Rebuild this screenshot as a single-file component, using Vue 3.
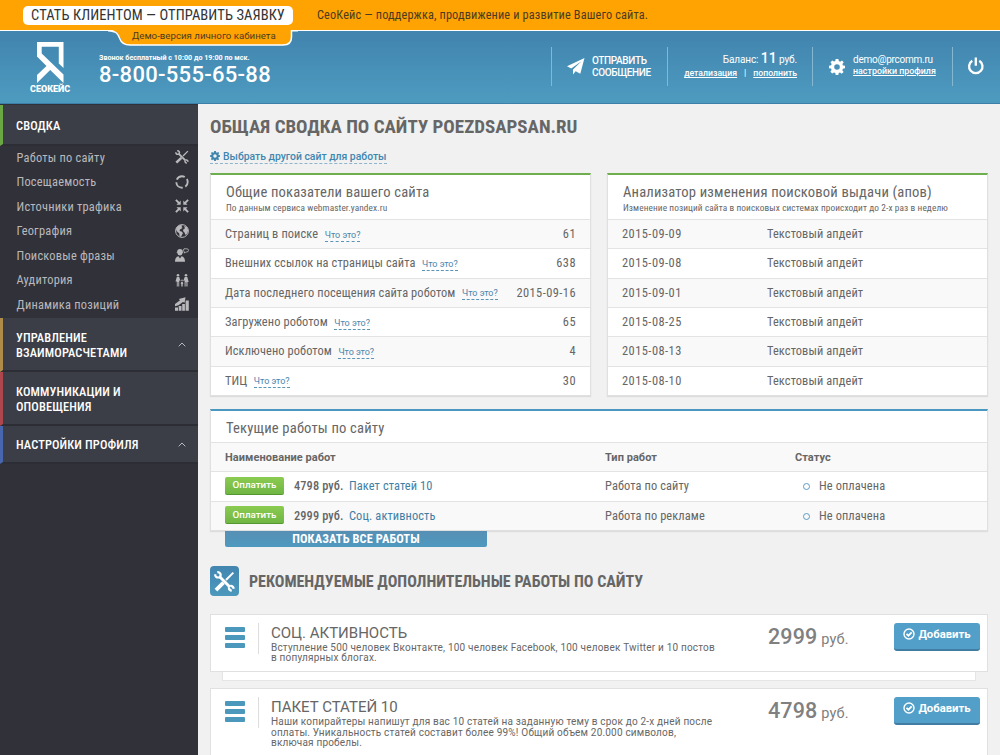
<template>
  <div class="page">
    <!-- Promo bar -->
    <div class="topbar">
      <a class="client-btn">СТАТЬ КЛИЕНТОМ — ОТПРАВИТЬ ЗАЯВКУ</a>
      <span class="slogan">СеоКейс — поддержка, продвижение и развитие Вашего сайта.</span>
    </div>

    <header class="header">
      <div class="demo-tab">
        <svg width="190" height="18" viewBox="0 0 190 18">
          <path d="M3 0 C10 1 10 4 13 9 Q15 15 22 15 H175 Q183.500 15 183.500 7 V0" fill="#ffa303" />
          <path d="M0 .7 C9 1 10 4 12 9 Q14 15 22 15 H175 Q183.500 15 183.500 7 V.7 H190" fill="none" stroke="#fff" stroke-width="1.500" />
        </svg>
        <span>Демо-версия личного кабинета</span>
      </div>

      <div class="logo">
        <svg width="27" height="41" viewBox="0 0 27 41">
          <path d="M0 0H26.500V26L21.800 21.500V4.700H4.700V11.500L26.500 32.500V41L13.200 28L0 41V33L9.500 24L0 14.500Z" fill="#fff" />
        </svg>
        <b>СЕОКЕЙС</b>
      </div>

      <div class="phone">
        <small>Звонок бесплатный с 10:00 до 19:00 по мск.</small>
        <strong>8-800-555-65-88</strong>
      </div>

      <div class="tool message">
        <svg width="18" height="17" viewBox="0 0 18 17" fill="#fff">
          <path d="M17.500 0L0 8.300L4.200 10.400L14.500 3.200L6 11.500V16.500L8.600 13.200L13.300 15.800Z" />
        </svg>
        <span>ОТПРАВИТЬ<br />СООБЩЕНИЕ</span>
      </div>
      <div class="tool balance">
        <div class="sum">Баланс: <b>11</b> руб.</div>
        <div class="links"><a>детализация</a><i>|</i><a>пополнить</a></div>
      </div>
      <div class="tool user">
        <svg width="16" height="16" viewBox="0 0 16 16"><path :d="gear" fill="#fff" fill-rule="evenodd" /></svg>
        <div>
          <div class="mail">demo@prcomm.ru</div>
          <a>настройки профиля</a>
        </div>
      </div>
      <div class="tool power">
        <svg width="18" height="18" viewBox="0 0 18 18" fill="none" stroke="#fff" stroke-width="2.300">
          <path d="M5.300 3.800A6.700 6.700 0 1 0 12.300 3.800M8.800 .5V8.800" />
        </svg>
      </div>
    </header>

    <div class="body">
      <aside class="sidebar">
        <div class="menu-head green">СВОДКА</div>
        <ul class="menu">
          <li v-for="item in menu" :key="item.text">
            <span>{{ item.text }}</span>
            <svg width="14" height="14" viewBox="0 0 14 14" v-html="item.icon"></svg>
          </li>
        </ul>
        <div v-for="s in sections" :key="s.color" class="menu-head" :class="s.color">
          <span>{{ s.text }}</span>
          <svg v-if="s.arrow" width="8" height="5" viewBox="0 0 8 5"><path d="M.7 4.300L4 1L7.300 4.300" fill="none" stroke="#b9babd" /></svg>
        </div>
      </aside>

      <main class="content">
        <h1>ОБЩАЯ СВОДКА ПО САЙТУ POEZDSAPSAN.RU</h1>
        <a class="choose">
          <svg width="10" height="10" viewBox="0 0 16 16"><path :d="gear" fill="#3f86af" fill-rule="evenodd" /></svg>
          <span>Выбрать другой сайт для работы</span>
        </a>

        <div class="columns">
          <section class="card">
            <div class="card-head">
              <h2>Общие показатели вашего сайта</h2>
              <p>По данным сервиса webmaster.yandex.ru</p>
            </div>
            <div v-for="row in stats" :key="row.name" class="row">
              <span>{{ row.name }}</span><a class="hint">Что это?</a>
              <span class="value">{{ row.value }}</span>
            </div>
          </section>
          <section class="card">
            <div class="card-head">
              <h2>Анализатор изменения поисковой выдачи (апов)</h2>
              <p>Изменение позиций сайта в поисковых системах происходит до 2-х раз в неделю</p>
            </div>
            <div v-for="d in updates" :key="d" class="row">
              <span class="date">{{ d }}</span><span>Текстовый апдейт</span>
            </div>
          </section>
        </div>

        <section class="card works">
          <div class="card-head"><h2>Текущие работы по сайту</h2></div>
          <div class="row titles">
            <b>Наименование работ</b><b>Тип работ</b><b>Статус</b>
          </div>
          <div v-for="w in works" :key="w.name" class="row">
            <div class="work"><button class="pay">Оплатить</button><em>{{ w.price }} руб.</em><a>{{ w.name }}</a></div>
            <span>{{ w.type }}</span>
            <span class="status"><i></i>Не оплачена</span>
          </div>
        </section>
        <button class="show-all">ПОКАЗАТЬ ВСЕ РАБОТЫ</button>

        <div class="recommend">
          <span class="badge"><svg width="21" height="21" viewBox="0 0 14 14" v-html="tools"></svg></span>
          <h3>РЕКОМЕНДУЕМЫЕ ДОПОЛНИТЕЛЬНЫЕ РАБОТЫ ПО САЙТУ</h3>
        </div>

        <div v-for="o in offers" :key="o.title" class="offer-wrap">
          <article class="offer">
            <div class="burger"><i></i><i></i><i></i></div>
            <div class="about">
              <h4>{{ o.title }}</h4>
              <p><template v-for="line in o.lines" :key="line">{{ line }}<br /></template></p>
            </div>
            <div class="price"><b>{{ o.price }}</b> руб.</div>
            <button class="add">
              <svg width="12" height="12" viewBox="0 0 12 12" fill="none" stroke="#fff">
                <circle cx="6" cy="6" r="5" stroke-width="1.400" />
                <path d="M3.500 5.900L5.400 7.700L8.700 4.300" stroke-width="1.800" />
              </svg>
              <span>Добавить</span>
            </button>
          </article>
          <div class="under"></div>
        </div>
      </main>
    </div>
  </div>
</template>

<script setup>
const gear = 'M6.600 0H9.400L9.800 2.100L11.200 2.700L13 1.500L14.700 3.300L13.400 5L14 6.500L16 6.800V9.300L13.900 9.700L13.300 11.200L14.600 13L12.700 14.700L11 13.500L9.700 14L9.300 16H6.700L6.300 14L5 13.400L3.200 14.600L1.400 12.800L2.600 11L2 9.600L0 9.200V6.700L2.100 6.300L2.700 5L1.500 3.200L3.300 1.400L5 2.600L6.300 2.100ZM8 5.200A2.800 2.800 0 1 0 8 10.800A2.800 2.800 0 1 0 8 5.200Z';

const tools =
  '<g fill="none" stroke="currentColor"><path d="M3.800 3.800L10.600 10.600" stroke-width="1.900"/><path d="M.8 2.200Q.7 4.600 3.400 4.300Q4.900 3.500 4.200 1.700Q3.500.7 2.200.8M10 10.800Q9.700 12.700 11.800 13.200M13.200 11.800Q12.600 9.700 10.800 10" stroke-width="1.500"/><path d="M8 6L12.900 1.100" stroke-width="1.300"/><path d="M1.300 12.700L6.300 7.800" stroke-width="2.500"/></g>';

const menu = [
  { text: 'Работы по сайту', icon: tools },
  { text: 'Посещаемость', icon: '<circle cx="7" cy="7" r="5.700" fill="none" stroke="currentColor" stroke-width="1.900" stroke-dasharray="9.200 2.740" stroke-dashoffset="4"/>' },
  { text: 'Источники трафика', icon: '<g fill="currentColor"><path d="M5.700 5.700H1.500L2.900 4.300L.2 1.600L1.600.2L4.300 2.900L5.700 1.500ZM8.300 5.700V1.500L9.700 2.900L12.400.2L13.800 1.600L11.100 4.300L12.500 5.700ZM5.700 8.300V12.500L4.300 11.100L1.600 13.800L.2 12.400L2.900 9.700L1.500 8.300ZM8.300 8.300H12.500L11.100 9.700L13.800 12.400L12.400 13.800L9.700 11.100L8.300 12.500Z"/></g>' },
  { text: 'География', icon: '<circle cx="7" cy="7" r="6.400" fill="none" stroke="currentColor"/><path d="M1 4.500Q2.300 1.700 5 1L7.500 1.500L6.500 3L7.500 4L5 5.500L4.500 7L6.500 7.500L8 9L6 12.800L4.500 12.500L4.300 9.500L1.500 7ZM9 2L12 3L13.200 6L12.300 9.500L10.500 11L9.500 8.500L8 7L8.600 5L10 4.500Z" fill="currentColor"/>' },
  { text: 'Поисковые фразы', icon: '<path d="M2.200 3.800Q2.200 1 5 1Q7.800 1 7.800 3.800L8.600 4.200L7.700 4.800Q7.400 7.400 5 7.400Q2.600 7.400 2.200 4.700L1.400 4.200ZM0 13.800Q0 9 3.500 8.300L5 10.500L6.500 8.300Q10 9 10 13.800Z" fill="currentColor"/><path d="M9 .8H12Q13.500.8 13.500 2.300Q13.500 4 11.800 4H10.700L9.500 5.200V3.800Q8.300 3.500 8.300 2.300Q8.300.8 9.500.8" fill="none" stroke="currentColor" stroke-width=".8"/>' },
  { text: 'Аудитория', icon: '<g fill="currentColor"><circle cx="3" cy="2.200" r="1.300"/><circle cx="11" cy="2.200" r="1.300"/><circle cx="7" cy="7.300" r=".8"/><path d="M1.800 4H4.200L5.500 8L4.800 8.300L4.200 6.800V13.500H3.300V9H2.700V13.500H1.800V8.500H.5ZM9.700 4H12.300L13.700 9H12.500V13.500H11.400V9.300H10.600V13.500H9.600V7L9 8.300L8.300 8ZM6.300 8.800H7.700L8.300 11H7.700V13.500H6.300V11H5.700Z"/></g>' },
  { text: 'Динамика позиций', icon: '<path d="M0 10.500H3V13.800H0ZM3.700 9H6.500V13.800H3.700ZM7.200 7H9.900V13.800H7.200ZM10.600 3.500H13.800V13.800H10.600ZM0 9.300V7L5 3.200L3.800 2L10.500.3L9.600 5.700L8 5L3.500 8.300Z" fill="currentColor"/>' },
];

const sections = [
  { text: 'УПРАВЛЕНИЕ ВЗАИМОРАСЧЕТАМИ', color: 'brown', arrow: true },
  { text: 'КОММУНИКАЦИИ И ОПОВЕЩЕНИЯ', color: 'red', arrow: false },
  { text: 'НАСТРОЙКИ ПРОФИЛЯ', color: 'blue', arrow: true },
];

const stats = [
  { name: 'Страниц в поиске', value: '61' },
  { name: 'Внешних ссылок на страницы сайта', value: '638' },
  { name: 'Дата последнего посещения сайта роботом', value: '2015-09-16' },
  { name: 'Загружено роботом', value: '65' },
  { name: 'Исключено роботом', value: '4' },
  { name: 'ТИЦ', value: '30' },
];

const updates = ['2015-09-09', '2015-09-08', '2015-09-01', '2015-08-25', '2015-08-13', '2015-08-10'];

const works = [
  { price: 4798, name: 'Пакет статей 10', type: 'Работа по сайту' },
  { price: 2999, name: 'Соц. активность', type: 'Работа по рекламе' },
];

const offers = [
  {
    title: 'СОЦ. АКТИВНОСТЬ',
    price: 2999,
    lines: ['Вступление 500 человек Вконтакте, 100 человек Facebook, 100 человек Twitter и 10 постов', 'в популярных блогах.'],
  },
  {
    title: 'ПАКЕТ СТАТЕЙ 10',
    price: 4798,
    lines: ['Наши копирайтеры напишут для вас 10 статей на заданную тему в срок до 2-х дней после', 'оплаты. Уникальность статей составит более 99%! Общий объем 20.000 символов,', 'включая пробелы.'],
  },
];
</script>

<style>
body {
  background: #f1f1f1;
  overflow: hidden;
}
</style>

<style scoped>
.page {
  height: 755px;
  overflow: hidden;
  display: flex;
  flex-direction: column;
  font-family: Roboto, "Liberation Sans", sans-serif;
  color: #666;
  font-size: 12px;
}
.page * {
  box-sizing: border-box;
}
h1, h2, h3, h4, p, ul {
  margin: 0;
  padding: 0;
}
button {
  border: 0;
  padding: 0;
  font-family: inherit;
}
svg {
  display: block;
  flex: none;
}

.topbar {
  height: 30px;
  flex: none;
  display: flex;
  align-items: center;
  background: #ffa303;
  padding-left: 23px;
  white-space: nowrap;
}
.client-btn {
  width: 270px;
  height: 19px;
  margin-top: 1px;
  border-radius: 5px;
  background: #fff;
  color: #333;
  font-size: 14.5px;
  line-height: 19px;
  text-align: center;
  font-stretch: 75%;
  letter-spacing: 0.08px;
}
.slogan {
  margin-left: 24px;
  color: #4b3b22;
  font-size: 12.3px;
  font-stretch: 75%;
  letter-spacing: 0.14px;
}

.header {
  position: relative;
  height: 74px;
  flex: none;
  display: flex;
  border-top: 1px solid #fff;
  border-bottom: 1px solid #3d80aa;
  background: linear-gradient(#4286b0 10%, #4d9abf 95%);
  color: #fff;
  white-space: nowrap;
}
.demo-tab {
  position: absolute;
  left: 108px;
  top: -1px;
}
.demo-tab span {
  position: absolute;
  left: 24px;
  top: -1px;
  font-size: 9.7px;
  line-height: 13px;
  color: #4b3b22;
}
.logo {
  width: 99px;
  padding: 11px 0 0 30px;
}
.logo svg {
  margin-left: 7px;
}
.logo b {
  display: block;
  font-size: 9px;
  font-weight: 900;
  line-height: 9px;
  margin-top: 2px;
}
.phone {
  width: 452px;
  padding-top: 22px;
}
.phone small {
  display: block;
  font-size: 7.15px;
  font-weight: 700;
  line-height: 9px;
}
.phone strong {
  display: block;
  font-size: 22px;
  font-weight: 500;
  line-height: 26px;
  letter-spacing: 0.3px;
}
.tool {
  height: 39px;
  margin-top: 16px;
  border-left: 1px solid #85b7d1;
  display: flex;
}
.message {
  width: 116px;
  align-items: center;
  padding-left: 15px;
  gap: 7px;
  font-size: 10px;
  font-weight: 500;
  line-height: 12px;
  letter-spacing: -0.35px;
}
.balance {
  width: 145px;
  flex-direction: column;
  align-items: flex-end;
  padding-right: 15px;
  font-size: 10px;
  letter-spacing: -0.1px;
}
.sum {
  padding-top: 2px;
  line-height: 18px;
}
.sum b {
  font-size: 14px;
  font-weight: 500;
}
.links {
  font-size: 8.7px;
  font-weight: 500;
  line-height: 11px;
  margin-top: -1px;
  letter-spacing: 0;
}
.links i {
  font-style: normal;
  margin: 0 7px;
}
.links a, .user a {
  text-decoration: underline;
}
.user {
  width: 140px;
  align-items: center;
  padding-left: 16px;
  gap: 8px;
}
.mail {
  margin-top: -4px;
  font-size: 10px;
  line-height: 13px;
  letter-spacing: -0.25px;
}
.user a {
  display: block;
  font-size: 8.9px;
  font-weight: 500;
  line-height: 11px;
}
.power {
  padding: 10px 0 0 14px;
}

.body {
  flex: 1;
  min-height: 0;
  display: flex;
}
.sidebar {
  width: 198px;
  flex: none;
  padding-top: 1px;
  background: #31313a;
}
.menu-head {
  display: flex;
  align-items: center;
  justify-content: space-between;
  height: 54px;
  padding: 1px 12px 0 13px;
  border-left: 3px solid;
  border-bottom: 2px solid #2d2d36;
  background: #3c3e47;
  font-size: 12.4px;
  font-weight: 500;
  line-height: 15px;
  font-stretch: 75%;
  letter-spacing: 0.12px;
}
.menu-head span {
  color: #fff;
  width: 135px;
}
.menu-head.green {
  height: 41px;
  border-left-color: #6aa845;
  color: #fff;
}
.brown { border-left-color: #b08c4a; }
.red { border-left-color: #ae474d; }
.menu-head.blue { border-left-color: #4866ae; height: 38px; }
.menu {
  list-style: none;
  height: 173px;
  margin-top: -1px;
}
.menu li {
  display: flex;
  align-items: center;
  justify-content: space-between;
  height: 24.500px;
  padding: 0 9px 0 16.500px;
  color: #b9b9bc;
  font-size: 12.4px;
  font-stretch: 75%;
  letter-spacing: 0.22px;
}

.content {
  flex: 1;
  min-width: 0;
  padding: 0 12px;
}
h1 {
  margin-top: 11px;
  font-size: 19px;
  line-height: 24px;
  font-stretch: 75%;
}
.choose {
  display: flex;
  align-items: center;
  width: 177px;
  height: 15px;
  margin-top: 10px;
  gap: 3px;
  border-bottom: 1px dashed #8db4cb;
  color: #3f86af;
  font-size: 10.4px;
  font-weight: 500;
  line-height: 15px;
  white-space: nowrap;
}
.choose span {
  padding-top: 1px;
}
.columns {
  display: grid;
  grid-template-columns: 381px 381px;
  gap: 16px;
  margin-top: 9px;
}
.card {
  border: 1px solid #e0e0e0;
  border-top: 2px solid #6fae4e;
  background: #fff;
  box-shadow: 0 1px 1px #ddd;
  white-space: nowrap;
}
.card-head {
  height: 44px;
  padding: 8px 0 0 15px;
}
h2 {
  font-size: 14.6px;
  font-weight: 400;
  line-height: 18px;
  font-stretch: 75%;
  letter-spacing: 0.17px;
}
.card-head p {
  font-size: 9.3px;
  line-height: 14px;
  font-stretch: 75%;
  letter-spacing: 0.1px;
}
.row {
  display: flex;
  align-items: center;
  height: 29.330px;
  padding: 0 14px 1px;
  border-top: 1px solid #e3e3e3;
  font-size: 12.4px;
  font-stretch: 75%;
  letter-spacing: 0.1px;
}
.row:nth-child(even) {
  background: #f9f9f9;
}
.hint {
  margin: 4px 0 0 6.500px;
  border-bottom: 1px dashed #5a94b7;
  color: #4a86ad;
  font-size: 9px;
  line-height: 11px;
  font-stretch: 100%;
  letter-spacing: 0;
}
.value {
  margin-left: auto;
  letter-spacing: 0.45px;
}
.date {
  width: 145px;
  letter-spacing: 0.47px;
}
.works {
  margin-top: 13px;
  border-top-color: #4a98c0;
}
.works .card-head {
  height: 31px;
}
.works .row {
  display: grid;
  grid-template-columns: 380px 190px 1fr;
}
.works .titles {
  padding-bottom: 0;
  font-size: 11px;
  font-stretch: 100%;
  letter-spacing: 0.05px;
}
.work {
  display: flex;
  align-items: center;
}
.work em {
  width: 55px;
  font-style: normal;
  font-weight: 500;
}
.work a {
  color: #3f7fa5;
}
.pay {
  width: 59px;
  height: 18px;
  margin-right: 10px;
  padding-bottom: 1px;
  border-bottom: 1px solid #549630;
  border-radius: 2px;
  background: linear-gradient(#8bcb51, #70b644);
  color: #fff;
  font-size: 9.8px;
  font-weight: 500;
}
.status {
  display: flex;
  align-items: center;
}
.status i {
  width: 7px;
  height: 7px;
  margin: 2px 9px 0 8px;
  border: 1px solid #5a9cc4;
  border-radius: 50%;
}
.show-all {
  display: block;
  width: 262px;
  height: 16px;
  margin-left: 15px;
  border-radius: 0 0 2px 2px;
  background: linear-gradient(#578fb4, #4e99bf);
  color: #fff;
  font-size: 12.4px;
  font-weight: 700;
  line-height: 13px;
  font-stretch: 75%;
  letter-spacing: 0.1px;
}
.recommend {
  display: flex;
  align-items: center;
  gap: 10px;
  margin-top: 19px;
}
.badge {
  width: 29px;
  height: 30px;
  padding: 5px 4px;
  border-radius: 4px;
  background: linear-gradient(#4286b0, #4d98bd);
  color: #fff;
}
h3 {
  padding-top: 3px;
  font-size: 16px;
  line-height: 20px;
  font-stretch: 75%;
}
.offer-wrap {
  margin-top: 7.500px;
}
.recommend + .offer-wrap {
  margin-top: 18px;
}
.offer {
  display: flex;
  height: 58px;
  padding: 8px 8px 0 13.500px;
  border: 1px solid #e0e0e0;
  background: #fff;
  white-space: nowrap;
}
.burger {
  width: 34.500px;
  height: 31px;
  flex: none;
  padding-top: 4px;
  border-right: 1px solid #ddd;
  display: flex;
  flex-direction: column;
  gap: 3px;
}
.burger i {
  width: 20px;
  height: 5px;
  border-radius: 1px;
  background: #4c98bd;
}
.about {
  width: 509px;
  flex: none;
  padding-left: 12px;
}
h4 {
  font-size: 15px;
  font-weight: 400;
  line-height: 20px;
}
.about p {
  font-size: 10px;
  line-height: 10.400px;
  letter-spacing: 0.19px;
}
.price {
  width: 126px;
  flex: none;
  padding-top: 1px;
  color: #808080;
  font-size: 14.5px;
  letter-spacing: 0.15px;
}
.price b {
  font-size: 21.5px;
  font-weight: 500;
}
.add {
  display: flex;
  flex: none;
  justify-content: center;
  width: 86px;
  height: 28px;
  padding-top: 5px;
  gap: 3px;
  border-bottom: 2px solid #417ca2;
  border-radius: 3px;
  background: #529fc9;
  color: #fff;
  font-size: 11.3px;
  font-weight: 700;
}
.under {
  height: 9px;
  margin: 0 12px;
  border: 1px solid #e5e5e5;
  border-top: 0;
  background: #fff;
}
.offer-wrap:last-child .offer {
  height: 90px;
}
</style>
